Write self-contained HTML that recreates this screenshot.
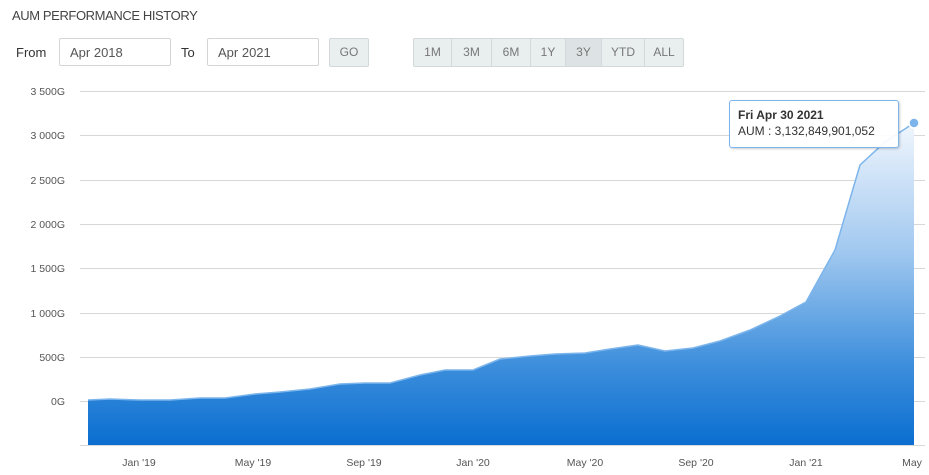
<!DOCTYPE html>
<html><head><style>
body{margin:0;width:929px;height:475px;background:#fff;font-family:"Liberation Sans",sans-serif;color:#333;position:relative;overflow:hidden}
.t{position:absolute;left:12px;top:8px;font-size:13px;color:#444;letter-spacing:-0.4px}
.lbl{position:absolute;top:45px;font-size:13px;color:#333}
.inp{position:absolute;top:38px;height:28px;border:1px solid #d5d5d5;border-radius:2px;font-size:13px;color:#555;line-height:28px;padding-left:10px;box-sizing:border-box}
.btn{position:absolute;top:38px;height:29px;background:#e9eeef;border:1px solid #d3d8da;box-sizing:border-box;font-size:12px;color:#777;text-align:center;line-height:27px}
.grp{position:absolute;left:413px;top:38px;height:29px;display:flex;border:1px solid #d3d8da;border-radius:2px;box-sizing:border-box;background:#e9eeef}
.grp div{font-size:12px;color:#777;line-height:27px;text-align:center;border-right:1px solid #d3d8da}
.grp div:last-child{border-right:0}
.tip{position:absolute;left:729px;top:100px;width:170px;height:48px;background:rgba(255,255,255,.92);border:1px solid #7cb5ec;border-radius:3px;box-shadow:1px 1px 2px rgba(0,0,0,.2);box-sizing:border-box;padding:6px 8px;font-size:12px;line-height:16px}
</style></head><body>
<div class="t">AUM PERFORMANCE HISTORY</div>
<div class="lbl" style="left:16px">From</div>
<div class="inp" style="left:59px;width:112px">Apr 2018</div>
<div class="lbl" style="left:181px">To</div>
<div class="inp" style="left:207px;width:112px">Apr 2021</div>
<div class="btn" style="left:329px;width:40px;border-radius:2px">GO</div>
<div class="grp">
<div style="width:37px">1M</div><div style="width:39px">3M</div><div style="width:38px">6M</div><div style="width:34px">1Y</div><div style="width:35px;background:#dde3e5">3Y</div><div style="width:42px">YTD</div><div style="width:38px">ALL</div>
</div>
<svg width="929" height="475" style="position:absolute;left:0;top:0">
<defs><linearGradient id="g2" gradientUnits="userSpaceOnUse" x1="0" y1="120" x2="0" y2="445"><stop offset="0" stop-color="#f2f7fd"/><stop offset="0.4" stop-color="#a2c9f0"/><stop offset="0.75" stop-color="#3e8fdc"/><stop offset="1" stop-color="#0a6ed0"/></linearGradient></defs>
<g stroke="#d8d8d8" stroke-width="1">
<line x1="80" x2="925" y1="91.5" y2="91.5"/><line x1="80" x2="925" y1="135.5" y2="135.5"/><line x1="80" x2="925" y1="180.5" y2="180.5"/><line x1="80" x2="925" y1="224.5" y2="224.5"/><line x1="80" x2="925" y1="268.5" y2="268.5"/><line x1="80" x2="925" y1="313.5" y2="313.5"/><line x1="80" x2="925" y1="357.5" y2="357.5"/><line x1="80" x2="925" y1="401.5" y2="401.5"/><line x1="80" x2="925" y1="445.5" y2="445.5"/>
</g>
<g font-size="10.5" fill="#555" text-anchor="end" font-family="Liberation Sans">
<text x="65" y="95">3 500G</text><text x="65" y="139">3 000G</text><text x="65" y="184">2 500G</text><text x="65" y="228">2 000G</text><text x="65" y="272">1 500G</text><text x="65" y="317">1 000G</text><text x="65" y="361">500G</text><text x="65" y="405">0G</text>
</g>
<path d="M88,400 L110,399 140,400 170,400 200,398 225,398 255,394 280,392 310,389 340,384 365,383 390,383 420,375 445,370 473,370 500,359 530,356 555,354 585,353 610,349 638,345 665,351 693,348 720,341 750,330 780,316 806,302 835,250 860,165 885,142 914,123 L914,445 L88,445 Z" fill="url(#g2)"/>
<path d="M88,400 L110,399 140,400 170,400 200,398 225,398 255,394 280,392 310,389 340,384 365,383 390,383 420,375 445,370 473,370 500,359 530,356 555,354 585,353 610,349 638,345 665,351 693,348 720,341 750,330 780,316 806,302 835,250 860,165 885,142 914,123" fill="none" stroke="#7cb5ec" stroke-width="1.5"/>
<circle cx="914" cy="123" r="5" fill="#7cb5ec" stroke="#fff" stroke-width="1.5"/>
<g font-size="10.5" fill="#555" text-anchor="middle" font-family="Liberation Sans">
<text x="139" y="466">Jan '19</text><text x="253" y="466">May '19</text><text x="364" y="466">Sep '19</text><text x="473" y="466">Jan '20</text><text x="585" y="466">May '20</text><text x="696" y="466">Sep '20</text><text x="806" y="466">Jan '21</text><text x="912" y="466">May</text>
</g>
</svg>
<div class="tip"><b>Fri Apr 30 2021</b><br>AUM : 3,132,849,901,052</div>
</body></html>
